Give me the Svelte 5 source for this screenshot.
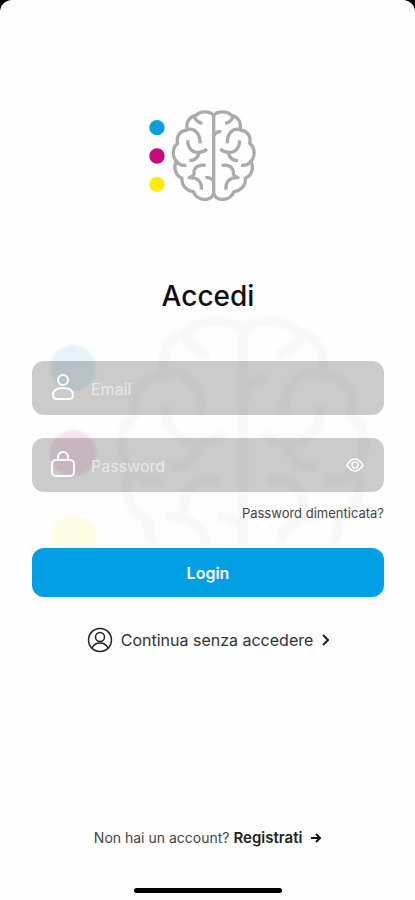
<script>
  let email = $state('');
  let password = $state('');
  let showPassword = $state(false);

  const dots = [
    { y: 83, color: '#0d9ddf' },
    { y: 168, color: '#c9097c' },
    { y: 253, color: '#ffec00' }
  ];
</script>

{#snippet hemisphere()}
  <path d="M220 46 C210 32 180 32 168 46 C148 50 137 66 142 90 C120 92 108 108 113 130 C96 142 96 172 110 184 C98 202 108 228 126 234 C124 258 142 274 160 275 C172 304 212 306 220 282" />
  <path d="M162 50 C168 62 176 68 187 70" />
  <path d="M142 88 C162 84 181 98 180 130" />
  <path d="M143 121 C144 146 158 158 175 157 C186 157 194 154 201 147" />
  <path d="M148 182 C166 182 174 174 177 158" />
  <path d="M108 182 C114 192 126 197 139 196" />
  <path d="M197 196 C174 192 160 204 162 222 C160 228 156 231 148 233 C172 232 186 244 184 269" />
{/snippet}

{#snippet brandLogo()}
  <svg viewBox="24 24 324 288" aria-hidden="true">
    {#each dots as dot}
      <circle cx="51" cy={dot.y} r="23" fill={dot.color} />
    {/each}
    <g class="brain">
      <path d="M221 44 V288" />
      {@render hemisphere()}
      <g transform="translate(442 0) scale(-1 1)">
        {@render hemisphere()}
      </g>
      <path d="M244 95 C232 94 225 99 222 108" />
      <path d="M196 232 C208 232 216 236 220 242" />
    </g>
  </svg>
{/snippet}

<main class="screen">
  <div class="logo">{@render brandLogo()}</div>

  <h1>Accedi</h1>

  <form onsubmit={(e) => e.preventDefault()}>
    <div class="watermark">{@render brandLogo()}</div>

    <div class="field">
      <label for="email" aria-label="Email">
        <svg width="24" height="28" viewBox="0 0 24 28">
          <circle cx="12" cy="6" r="5" />
          <path d="M2 21 C2 16 6 14 12 14 C18 14 22 16 22 21 C22 24 20 25 18 25 H6 C4 25 2 24 2 21 Z" />
        </svg>
      </label>
      <input id="email" type="email" placeholder="Email" bind:value={email} />
    </div>

    <div class="field">
      <label for="password" aria-label="Password">
        <svg width="24" height="28" viewBox="0 0 24 28">
          <path d="M7 10 V7 C7 3 9 1 12 1 C15 1 17 3 17 7 V10" />
          <rect x="1" y="9" width="22" height="16" rx="4" />
        </svg>
      </label>
      <input
        id="password"
        type={showPassword ? 'text' : 'password'}
        placeholder="Password"
        bind:value={password}
      />
      <button
        class="eye"
        type="button"
        aria-label="Mostra password"
        onclick={() => (showPassword = !showPassword)}
      >
        <svg width="18" height="16" viewBox="0 0 18 16">
          <path d="M1 8 C6 0 12 0 17 8 C12 16 6 16 1 8 Z" />
          <circle cx="9" cy="8" r="3" />
        </svg>
      </button>
    </div>

    <a class="forgot" href="#recupera">Password dimenticata?</a>

    <button class="login" type="submit">Login</button>
  </form>

  <a class="guest" href="#ospite">
    <svg width="26" height="26" viewBox="0 0 26 26">
      <circle cx="13" cy="13" r="11.5" />
      <circle cx="13" cy="10" r="4.5" />
      <path d="M5 21 C7 17 10 16 13 16 C16 16 19 17 21 21" />
    </svg>
    <span>Continua senza accedere</span>
    <svg class="chevron" width="8" height="12" viewBox="0 0 8 12">
      <path d="M2 1 L7 6 L2 11" />
    </svg>
  </a>

  <footer>
    <p>
      Non hai un account?
      <a href="#registrati">
        Registrati
        <svg width="12" height="10" viewBox="0 0 12 10">
          <path d="M1 5 H10 M6 1 L10 5 L6 9" />
        </svg>
      </a>
    </p>
    <div class="home-bar"></div>
  </footer>
</main>

<style>
  :global(body) {
    margin: 0;
    background: #000;
  }

  .screen {
    display: flex;
    flex-direction: column;
    align-items: center;
    box-sizing: border-box;
    min-height: 100vh;
    padding: 108px 31px 7px 32px;
    background: #fefefe;
    border-radius: 12px 12px 0 0;
    font-family: Inter, 'Liberation Sans', sans-serif;
    color: #111;
  }

  svg {
    display: block;
    fill: none;
  }

  .brain {
    stroke: #ababab;
    stroke-width: 10;
    stroke-linejoin: round;
  }

  .logo {
    width: 108px;
    margin-right: 12px;
  }

  h1 {
    margin: 74px 0 47px;
    font-size: 28px;
    line-height: 36px;
    font-weight: 500;
  }

  form {
    position: relative;
    display: flex;
    flex-direction: column;
    width: 100%;
  }

  /* Faded brand mark behind the fields, cut off at the login button */
  .watermark {
    position: absolute;
    top: -52px;
    left: 14px;
    width: 324px;
    height: 235px;
    overflow: hidden;
    opacity: 0.1;
    filter: blur(1px);
  }

  .watermark .brain {
    stroke: #c8c8c8;
  }

  .field {
    position: relative;
    display: flex;
    align-items: center;
    box-sizing: border-box;
    height: 54px;
    margin-bottom: 23px;
    padding: 0 20px 0 19px;
    background: rgba(0, 0, 0, 0.2);
    border-radius: 12px;
  }

  .field svg {
    stroke: #fff;
    stroke-width: 2;
  }

  .field .eye svg {
    stroke-width: 1.5;
  }

  input {
    flex: 1;
    min-width: 0;
    margin-left: 16px;
    padding: 2px 0 0;
    border: 0;
    outline: 0;
    background: none;
    color: #fff;
    font: 400 16px/24px Inter, 'Liberation Sans', sans-serif;
  }

  input::placeholder {
    color: #e8e8e8;
    opacity: 1;
  }

  button {
    border: 0;
    cursor: pointer;
  }

  .eye {
    padding: 0;
    background: none;
  }

  a {
    color: inherit;
    text-decoration: none;
  }

  .forgot {
    position: relative;
    align-self: flex-end;
    margin-top: -12px;
    font-size: 13px;
    line-height: 20px;
    color: #444;
  }

  .login {
    position: relative;
    height: 49px;
    margin-top: 25px;
    padding: 0;
    background: #039fe5;
    border-radius: 12px;
    color: #fff;
    font: 600 16px/24px Inter, 'Liberation Sans', sans-serif;
  }

  .guest {
    display: flex;
    align-items: center;
    gap: 8px;
    margin-top: 30px;
    font-size: 16px;
    line-height: 26px;
    color: #333;
  }

  .guest svg {
    stroke: #222;
    stroke-width: 1.5;
  }

  .guest .chevron {
    stroke-width: 2;
  }

  footer {
    display: flex;
    flex-direction: column;
    align-items: center;
    width: 100%;
    margin-top: auto;
  }

  p {
    margin: 0 0 40px;
    font-size: 14px;
    line-height: 20px;
    color: #444;
  }

  p a {
    font-size: 15px;
    font-weight: 600;
    color: #222;
  }

  p svg {
    display: inline-block;
    margin-left: 4px;
    stroke: #111;
    stroke-width: 2;
  }

  .home-bar {
    width: 148px;
    height: 5px;
    background: #000;
    border-radius: 3px;
  }
</style>
